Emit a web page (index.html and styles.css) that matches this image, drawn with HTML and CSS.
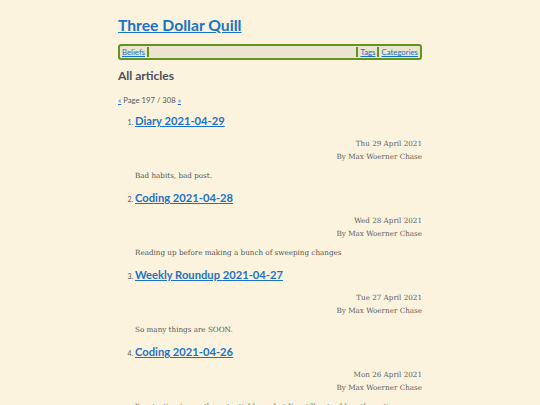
FILE: index.html
```html
<!DOCTYPE html>
<html>
<head>
<meta charset="utf-8">
<link rel="stylesheet" href="styles.css">
</head>
<body>
<div class="page">
  <header class="site-header">
    <h1 class="site-title"><a href="#">Three Dollar Quill</a></h1>
    <nav class="nav">
      <a class="nav-item" href="#">Beliefs</a>
      <span class="nav-fill"></span>
      <a class="nav-item sep" href="#">Tags</a>
      <a class="nav-item sep" href="#">Categories</a>
    </nav>
  </header>
  <main>
    <h2 class="page-heading">All articles</h2>
    <p class="pager"><a href="#">«</a> Page 197 / 308 <a href="#">»</a></p>
    <ol class="articles" start="1">
      <li class="article">
        <h3 class="article-title"><a href="#">Diary 2021-04-29</a></h3>
        <div class="meta">
          <div>Thu 29 April 2021</div>
          <div>By Max Woerner Chase</div>
        </div>
        <p class="summary">Bad habits, bad post.</p>
      </li>
      <li class="article">
        <h3 class="article-title"><a href="#">Coding 2021-04-28</a></h3>
        <div class="meta">
          <div>Wed 28 April 2021</div>
          <div>By Max Woerner Chase</div>
        </div>
        <p class="summary">Reading up before making a bunch of sweeping changes</p>
      </li>
      <li class="article">
        <h3 class="article-title"><a href="#">Weekly Roundup 2021-04-27</a></h3>
        <div class="meta">
          <div>Tue 27 April 2021</div>
          <div>By Max Woerner Chase</div>
        </div>
        <p class="summary">So many things are SOON.</p>
      </li>
      <li class="article">
        <h3 class="article-title"><a href="#">Coding 2021-04-26</a></h3>
        <div class="meta">
          <div>Mon 26 April 2021</div>
          <div>By Max Woerner Chase</div>
        </div>
        <p class="summary">I'm starting to see the potential here, but I'm still not sold on the entire package.</p>
      </li>
    </ol>
  </main>
</div>
</body>
</html>
```
FILE: styles.css
```css
html, body {
  margin: 0;
  padding: 0;
  background: #fbf3dd;
}
body {
  font-family: "DejaVu Serif", serif;
  color: #555555;
}
.page {
  width: 304px;
  margin: 0 auto;
}
.site-title {
  margin: 0;
  padding-top: 14px;
  font-family: Lato, sans-serif;
  font-size: 15.7px;
  line-height: 22px;
  font-weight: 700;
}
.site-title a {
  color: #1c72c6;
}
.nav {
  margin-top: 8px;
  display: flex;
  align-items: stretch;
  height: 12px;
  border: 2px solid #62941f;
  border-radius: 3px;
  background: #ebe4d0;
  font-family: Lato, sans-serif;
  font-size: 7.8px;
  line-height: 12px;
}
.nav-item {
  color: #1c72c6;
  padding: 0 2px;
}
.nav-fill {
  flex: 1;
  border-left: 2px solid #62941f;
  border-right: 2px solid #62941f;
  margin: 1px 0;
}
.nav-item.sep + .nav-item.sep {
  border-left: 2px solid #62941f;
  margin: 1px 0;
  line-height: 10px;
}
.page-heading {
  margin: 8px 0 0;
  font-family: Lato, sans-serif;
  font-size: 12px;
  line-height: 16px;
  color: #4a5057;
}
.pager {
  margin: 11px 0 0;
  font-family: Lato, sans-serif;
  font-size: 7.7px;
  line-height: 10px;
  color: #555b61;
}
.pager a {
  color: #1c72c6;
}
.articles {
  margin: 0;
  padding-left: 17px;
  font-family: Lato, sans-serif;
  font-size: 7px;
}
.article {
  padding-top: 8px;
}
.article-title {
  margin: 0;
  font-family: Lato, sans-serif;
  font-size: 11.2px;
  line-height: 16px;
  font-weight: 700;
  display: inline;
}
.article-title a {
  color: #1c72c6;
}
.meta {
  margin-top: 8px;
  text-align: right;
  font-family: "DejaVu Serif", serif;
  font-size: 7.2px;
  line-height: 13px;
  color: #5f5f5f;
}
.summary {
  margin: 6px 0 0;
  font-family: "DejaVu Serif", serif;
  font-size: 7.2px;
  line-height: 13px;
  color: #555555;
}
```
